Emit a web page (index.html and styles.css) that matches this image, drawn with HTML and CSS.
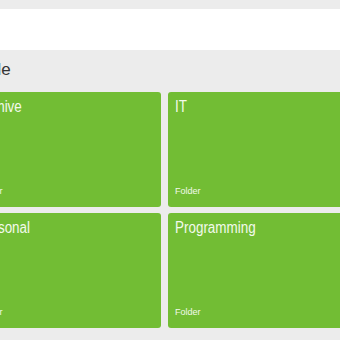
FILE: index.html
```html
<!DOCTYPE html>
<html lang="en">
<head>
<meta charset="utf-8">
<title>Folders</title>
<link rel="stylesheet" href="styles.css">
</head>
<body>
<header class="topbar"></header>
<main class="content">
  <h1 class="page-title">Code</h1>
  <div class="grid">
    <a class="tile"><span class="tile-name">Archive</span><span class="tile-type">Folder</span></a>
    <a class="tile"><span class="tile-name">IT</span><span class="tile-type">Folder</span></a>
    <a class="tile"><span class="tile-name">Personal</span><span class="tile-type">Folder</span></a>
    <a class="tile"><span class="tile-name">Programming</span><span class="tile-type">Folder</span></a>
  </div>
</main>
</body>
</html>
```
FILE: styles.css
```css
html, body {
  margin: 0;
  padding: 0;
}
body {
  background: #ececec;
  font-family: "Liberation Sans", Arial, sans-serif;
  overflow: hidden;
  width: 340px;
  height: 340px;
}
.topbar {
  margin-top: 9px;
  height: 41px;
  background: #ffffff;
}
.content {
  margin-left: -30px;
  width: 400px;
}
.page-title {
  margin: 10px 0 12px 0;
  font-size: 17px;
  line-height: 20px;
  font-weight: normal;
  color: #333333;
}
.grid {
  display: grid;
  grid-template-columns: 191px 191px;
  grid-auto-rows: 115px;
  column-gap: 7px;
  row-gap: 6px;
}
.tile {
  display: flex;
  flex-direction: column;
  justify-content: space-between;
  background: #72bd34;
  border-radius: 3px;
  padding: 5px 7px 10px 7px;
  color: #f3faec;
  text-decoration: none;
}
.tile-name {
  display: inline-block;
  font-size: 16px;
  line-height: 19px;
  transform: scaleX(0.84);
  transform-origin: left center;
  white-space: nowrap;
}
.tile-type {
  font-size: 9px;
  line-height: 11px;
}
```
